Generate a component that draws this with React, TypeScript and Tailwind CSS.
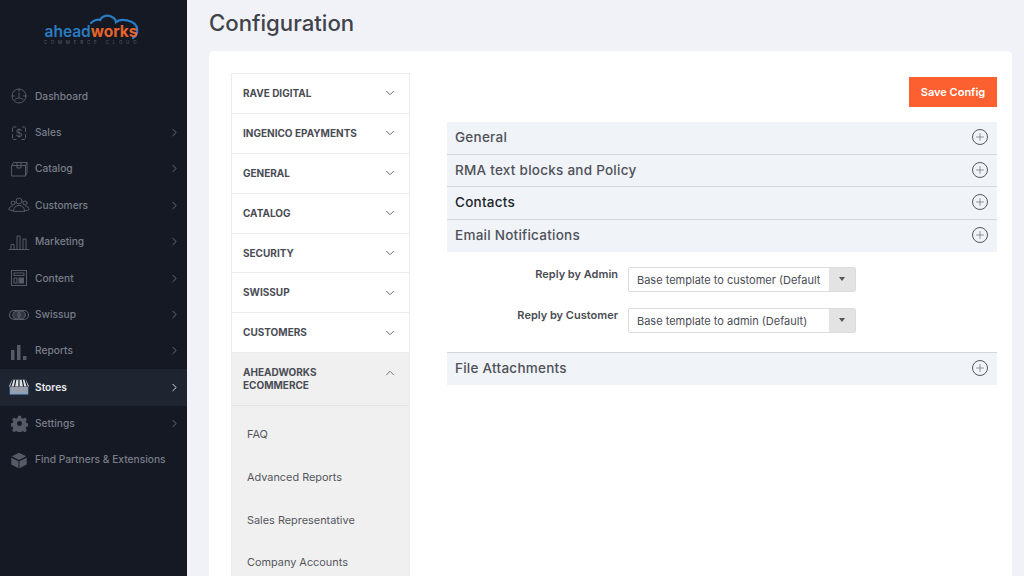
import React from "react";
import { ChevronRight, ChevronDown, ChevronUp, Plus } from "lucide-react";

const S = ({ children, w = 22, h = 22 }: { children: React.ReactNode; w?: number; h?: number }) => (
  <svg width={w} height={h} viewBox="0 0 22 22" fill="none" stroke="currentColor" strokeWidth="1" strokeLinecap="round" strokeLinejoin="round" className="text-[#565a66]">
    {children}
  </svg>
);

const icons: Record<string, React.ReactNode> = {
  Dashboard: (
    <S>
      <circle cx="11" cy="11" r="7" />
      <path d="M11 4v2M4.500 11h2M15.500 11h2M11 8v4M7 14.500c1.500-1 2.500-1.500 4-1.500s2.500.5 4 1.500" />
    </S>
  ),
  Sales: (
    <S>
      <path d="M5.500 5H8M4.500 6v3.500M4.500 12.500v3.500M5.500 17.500H8M14.500 5h2M17.500 6v3.500M17.500 12.500v3.500M14 17.500h2.500" />
      <text x="11" y="15" textAnchor="middle" fontSize="11" fill="currentColor" stroke="none" fontFamily="Inter, sans-serif">$</text>
    </S>
  ),
  Catalog: (
    <S>
      <path d="M4 7.500h13.500V18H4zM4 7.500 5.500 4.500H19v10l-1.500 3.500M17.500 7.500 19 4.500M9 4.500v5.500h4V4.500" />
    </S>
  ),
  Customers: (
    <S w={24}>
      <circle cx="11" cy="7" r="3" />
      <circle cx="5" cy="9" r="2" />
      <circle cx="17" cy="9" r="2" />
      <path d="M5.500 17c0-3.500 2-5.500 5.500-5.500s5.500 2 5.500 5.500zM1 15.500c0-2 1.500-3.500 3.500-3.500M21 15.500c0-2-1.500-3.500-3.500-3.500M1 15.500c1 1 2.500 1 4.500 1.500M21 15.500c-1 1-2.500 1-4.500 1.500" />
    </S>
  ),
  Marketing: (
    <S w={24}>
      <path d="M1 18.500h20M3 18.500v-5h3v5M9 18.500V5h3v13.500M15 18.500V8h3v10.500" />
    </S>
  ),
  Content: (
    <S>
      <path d="M3.500 3.500h15v15h-15zM6 6h10v2.500H6zM6 11h3v5H6z" strokeWidth="1.100" />
      <path d="M10.500 10.500h5.500v6h-5.500z" fill="currentColor" stroke="none" />
    </S>
  ),
  Swissup: (
    <S w={24}>
      <rect x="1.500" y="6.500" width="19" height="9" rx="4.500" strokeWidth="1.200" />
      <circle cx="8.500" cy="11" r="3.800" fill="currentColor" fillOpacity=".45" />
      <circle cx="13.500" cy="11" r="3.800" fill="currentColor" fillOpacity=".45" />
    </S>
  ),
  Reports: (
    <svg width="22" height="22" viewBox="0 0 22 22" fill="#565a66">
      <rect x="3" y="10" width="3.500" height="10" />
      <rect x="9" y="5" width="3.500" height="15" />
      <rect x="15" y="16" width="3.500" height="4" />
    </svg>
  ),
  Stores: (
    <svg width="22" height="22" viewBox="0 0 24 22" fill="none">
      <path d="M4.500 3h15L23 10.500H1z" fill="#dfe1e6" />
      <path d="M8.500 3 7 10.500M12 3v7.500M15.500 3l1.500 7.500M5.500 3 3 10.500M18.500 3 21 10.500" stroke="#141923" strokeWidth="1.300" />
      <path d="M2.500 11v7.500h19V11" fill="#9a9eab" stroke="#7ba6d4" strokeWidth="1.200" />
    </svg>
  ),
  Settings: (
    <svg width="17" height="17" viewBox="0 0 24 24" fill="#565a66" fillRule="evenodd">
      <path d="M10 1h4l.6 3.200 2.300 1 2.700-1.800 2.900 2.900-1.800 2.700 1 2.300 3.200.6v4l-3.200.6-1 2.300 1.800 2.700-2.900 2.900-2.700-1.800-2.300 1-.6 3.200h-4l-.6-3.200-2.300-1-2.700 1.800-2.900-2.900 1.800-2.700-1-2.300-3.200-.6v-4l3.200-.6 1-2.300-1.800-2.700 2.900-2.900 2.700 1.800 2.300-1zM12 8.500a3.500 3.500 0 1 0 0 7 3.500 3.500 0 0 0 0-7z" />
    </svg>
  ),
  "Find Partners & Extensions": (
    <svg width="20" height="20" viewBox="0 0 22 22" fill="#565a66">
      <path d="M11 3 19 7 11 11 3 7z" />
      <path d="M2.500 8.500 10.500 12.500V20L2.500 16zM19.500 8.500 11.500 12.500V20L19.500 16z" />
    </svg>
  ),
};

const nav: [string, boolean][] = [
  ["Dashboard", false],
  ["Sales", true],
  ["Catalog", true],
  ["Customers", true],
  ["Marketing", true],
  ["Content", true],
  ["Swissup", true],
  ["Reports", true],
  ["Stores", true],
  ["Settings", true],
  ["Find Partners & Extensions", false],
];

const groups = ["RAVE DIGITAL", "INGENICO EPAYMENTS", "GENERAL", "CATALOG", "SECURITY", "SWISSUP", "CUSTOMERS"];
const subs = ["FAQ", "Advanced Reports", "Sales Representative", "Company Accounts"];

const Section = ({ title, dark, last }: { title: string; dark?: boolean; last?: boolean }) => (
  <div className={`flex items-center justify-between bg-[#f0f3f8] pb-[1px] pl-[8px] pr-[9px] ${last ? "h-[32px]" : "h-[32.500px] border-b border-[#d4d6da]"}`}>
    <span className={`text-[13.500px] font-medium tracking-[0.25px] ${dark ? "text-[#22252b]" : "text-[#4f5159]"}`}>{title}</span>
    <span className="flex h-4 w-4 items-center justify-center rounded-full border border-[#55575d] text-[#55575d]">
      <Plus size={12} strokeWidth={1.200} />
    </span>
  </div>
);

const Select = ({ label, value }: { label: string; value: string }) => (
  <div className="flex items-center">
    <span className="mr-[10px] w-[171px] -translate-y-[5px] text-right text-[11px] font-semibold text-[#4a4c54]">{label}</span>
    <div className="flex h-[25px] w-[228px] rounded-[2px] border border-[#dcdcdc] bg-white">
      <span className="flex-1 overflow-hidden whitespace-nowrap pl-[8px] pr-1 text-[11px] leading-[24px] text-[#4a4c54]">{value}</span>
      <span className="flex w-[26px] shrink-0 items-center justify-center bg-[#e3e3e3]">
        <span className="border-x-[3px] border-t-[4px] border-x-transparent border-t-[#555]" />
      </span>
    </div>
  </div>
);

export default function App() {
  return (
    <div className="flex h-[576px] w-[1024px] overflow-hidden bg-[#f0f2f7] font-['Inter','Liberation_Sans',sans-serif]">
      <aside className="w-[187px] shrink-0 bg-[#141923]">
        <div className="flex h-[78px] flex-col items-center pt-[12px]">
          <div className="relative h-[28px] w-[100px]">
            <svg className="absolute -left-[1px] top-0" width="100" height="30" viewBox="0 0 100 30" fill="none">
              <path d="M48 11c3-3 7-4 9-3 2-4 8-6 12-3 2 1 4 3 4 5 4-3 11-2 16 0 4 2 6 6 5 11-1 3-2 4-4 5" stroke="#2a7cc2" strokeWidth="2.200" strokeLinecap="round" />
            </svg>
            <div className="absolute left-[1px] top-[11px] flex whitespace-nowrap text-[15.500px] font-semibold leading-[18px]">
              <span className="text-[#2a7cc2]">ahead</span>
              <span className="font-bold text-[#e8642a]">works</span>
            </div>
          </div>
          <div className="-ml-[3px] mt-[1px] text-[4.500px] leading-[4px] tracking-[3.800px] text-[#5a5f6b]">COMMERCE CLOUD</div>
        </div>
        <nav>
          {nav.map(([n, arrow]) => {
            const active = n === "Stores";
            return (
              <div key={n} className={`flex h-[36.400px] items-center ${active ? "bg-[#1e2430] text-white" : "text-[#7a7d8a]"}`}>
                <span className="flex w-[35px] shrink-0 justify-center pl-[3px]">{icons[n]}</span>
                <span className={`flex-1 whitespace-nowrap text-[10.200px] ${active ? "font-semibold text-[#e8e9ed]" : "font-medium"}`}>{n}</span>
                {arrow && <ChevronRight size={13} strokeWidth={1.500} className="mr-[6px]" />}
              </div>
            );
          })}
        </nav>
      </aside>
      <main className="flex-1 pl-[22px] pr-[12px]">
        <h1 className="h-[51px] pt-[7px] text-[22.200px] font-medium leading-[32px] text-[#41434b]">Configuration</h1>
        <div className="flex h-[525px] overflow-hidden rounded-t-[5px] bg-white pl-[22px] pt-[22px]">
          <div className="h-[520px] w-[179px] shrink-0 border border-[#ececec]">
            {groups.map((g) => (
              <div key={g} className="flex h-[39.900px] items-center justify-between border-b border-[#ececec] pl-[11px] pr-[12px]">
                <span className="text-[10px] font-bold text-[#4a4c54]">{g}</span>
                <ChevronDown size={14} strokeWidth={1.400} className="text-[#55575d]" />
              </div>
            ))}
            <div className="flex h-[53px] justify-between border-b border-[#e4e4e4] bg-[#f0f0f0] pl-[11px] pr-[12px] pt-[13px]">
              <span className="text-[10px] font-bold leading-[13px] text-[#4a4c54]">AHEADWORKS<br />ECOMMERCE</span>
              <ChevronUp size={14} strokeWidth={1.400} className="text-[#55575d]" />
            </div>
            <div className="h-[300px] bg-[#f0f0f0] pl-[15px] pt-[7px]">
              {subs.map((s) => (
                <div key={s} className="flex h-[42.700px] items-center text-[10.900px] text-[#55575f]">{s}</div>
              ))}
            </div>
          </div>
          <div className="ml-[37px] w-[550px]">
            <div className="mt-[4px] flex justify-end">
              <button className="h-[30px] w-[88px] bg-[#fc6030] text-[11px] font-semibold text-white">Save Config</button>
            </div>
            <div className="mt-[15px]">
              <Section title="General" />
              <Section title="RMA text blocks and Policy" />
              <Section title="Contacts" dark />
              <Section title="Email Notifications" last />
            </div>
            <div className="flex flex-col gap-[16px] pt-[15px] pb-[19px]">
              <Select label="Reply by Admin" value="Base template to customer (Default" />
              <Select label="Reply by Customer" value="Base template to admin (Default)" />
            </div>
            <div className="border-t border-[#d4d6da]">
              <Section title="File Attachments" last />
            </div>
          </div>
        </div>
      </main>
    </div>
  );
}
